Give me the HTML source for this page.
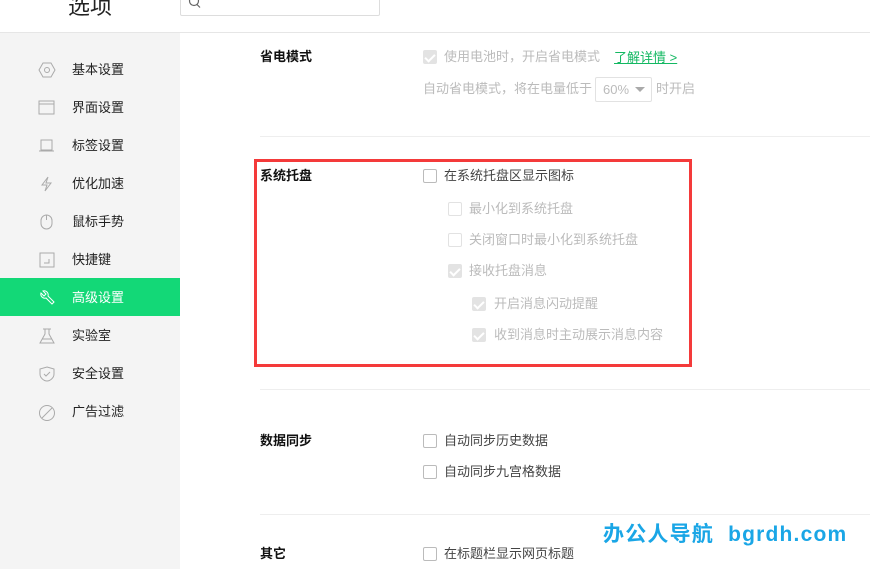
<!DOCTYPE html>
<html><head><meta charset="utf-8"><style>
*{margin:0;padding:0;box-sizing:border-box}
body{width:870px;height:569px;overflow:hidden;background:#fff;font-family:"Liberation Sans","Noto Sans CJK SC",sans-serif;font-size:13px;color:#222;position:relative}
.a{position:absolute;white-space:nowrap}
.side{position:absolute;left:0;top:33px;width:180px;height:536px;background:#f4f4f4}
.mi{position:absolute;left:0;width:180px;height:38px;line-height:40px;padding-left:72px;font-size:13px;color:#222}
.mi svg{position:absolute;left:38px;top:12px}
.act{background:#13d877;color:#fff}
.cb{position:absolute;width:14px;height:14px;border:1px solid #bbb;border-radius:2px;background:#fff}
.cb.d{border-color:#e2e2e2}
.cb.c{background:#e3e3e3;border-color:#e3e3e3}
.cb.c:after{content:"";position:absolute;left:3px;top:1px;width:4px;height:8px;border:solid #fff;border-width:0 2px 2px 0;transform:rotate(45deg)}
.t{position:absolute;white-space:nowrap;font-size:13px;line-height:18px}
.g{color:#bbb}.k{color:#444}
.h{position:absolute;left:260px;font-weight:bold;font-size:13px;line-height:18px;color:#111}
.hr{position:absolute;left:260px;width:610px;height:1px;background:#eee}
</style></head><body>
<div class="a" style="left:68px;top:-11px;font-size:22px;color:#222">选项</div>
<div class="a" style="left:180px;top:-6px;width:200px;height:22px;border:1px solid #ddd;border-radius:2px"></div>
<svg class="a" style="left:188px;top:-4px" width="14" height="14"><circle cx="6" cy="5" r="4.5" fill="none" stroke="#666" stroke-width="1.2"/><line x1="9" y1="8.5" x2="12" y2="11.5" stroke="#666" stroke-width="1.2"/></svg>
<div class="a" style="left:0;top:32px;width:870px;height:1px;background:#e6e6e6"></div>
<div class="side">
<div class="mi" style="top:17px"><svg width="18" height="16"><polygon points="5,1 13,1 17,8 13,15 5,15 1,8" fill="none" stroke="#aaa"/><circle cx="9" cy="8" r="2.5" fill="none" stroke="#aaa"/></svg>基本设置</div>
<div class="mi" style="top:55px"><svg width="18" height="16"><rect x="1" y="1" width="15" height="13" fill="none" stroke="#aaa"/><line x1="1" y1="4" x2="16" y2="4" stroke="#aaa"/></svg>界面设置</div>
<div class="mi" style="top:93px"><svg width="18" height="16"><path d="M3 2h11v10H3zM1 13h15" fill="none" stroke="#aaa"/></svg>标签设置</div>
<div class="mi" style="top:131px"><svg width="18" height="16"><path d="M10 1L4 9h5l-2 6 6-8H8z" fill="none" stroke="#aaa"/></svg>优化加速</div>
<div class="mi" style="top:169px"><svg width="18" height="16"><rect x="3" y="1" width="11" height="14" rx="5.5" fill="none" stroke="#aaa"/><line x1="8.5" y1="1" x2="8.5" y2="6" stroke="#aaa"/></svg>鼠标手势</div>
<div class="mi" style="top:207px"><svg width="18" height="16"><rect x="2" y="1" width="14" height="14" fill="none" stroke="#aaa"/><path d="M11 7v4H6" fill="none" stroke="#aaa"/></svg>快捷键</div>
<div class="mi act" style="top:245px"><svg width="18" height="16"><path d="M3 3l3 3 2-2-3-3c3-1 6 2 5 5l6 6-2 2-6-6c-3 1-6-2-5-5z" fill="none" stroke="#fff"/></svg>高级设置</div>
<div class="mi" style="top:283px"><svg width="18" height="16"><path d="M5 1h8M7 1v5L2 15h14L11 6V1M4 11h10" fill="none" stroke="#aaa"/></svg>实验室</div>
<div class="mi" style="top:321px"><svg width="18" height="16"><path d="M9 1l7 2v5c0 4-4 7-7 7S2 12 2 8V3z" fill="none" stroke="#aaa"/><path d="M6 8l2 2 4-4" fill="none" stroke="#aaa"/></svg>安全设置</div>
<div class="mi" style="top:359px"><svg width="18" height="18"><circle cx="9" cy="9" r="7.5" fill="none" stroke="#aaa"/><line x1="4" y1="14" x2="14" y2="4" stroke="#aaa"/></svg>广告过滤</div>
</div>

<div class="h" style="top:48px">省电模式</div>
<div class="cb c" style="left:423px;top:50px"></div>
<div class="t g" style="left:444px;top:48px">使用电池时，开启省电模式</div>
<div class="t" style="left:614px;top:49px;color:#13b862;text-decoration:underline">了解详情 &gt;</div>
<div class="t g" style="left:423px;top:80px">自动省电模式，将在电量低于</div>
<div class="a" style="left:595px;top:77px;width:57px;height:25px;border:1px solid #e2e2e2;border-radius:2px"></div>
<div class="t g" style="left:603px;top:81px">60%</div>
<div class="a" style="left:635px;top:87px;width:0;height:0;border-left:5px solid transparent;border-right:5px solid transparent;border-top:5px solid #aaa"></div>
<div class="t g" style="left:656px;top:80px">时开启</div>
<div class="hr" style="top:136px"></div>

<div class="a" style="left:254px;top:159px;width:438px;height:208px;border:3px solid #f43a3a"></div>
<div class="h" style="top:167px">系统托盘</div>
<div class="cb" style="left:423px;top:169px"></div>
<div class="t k" style="left:444px;top:167px">在系统托盘区显示图标</div>
<div class="cb d" style="left:448px;top:202px"></div>
<div class="t g" style="left:469px;top:200px">最小化到系统托盘</div>
<div class="cb d" style="left:448px;top:233px"></div>
<div class="t g" style="left:469px;top:231px">关闭窗口时最小化到系统托盘</div>
<div class="cb c" style="left:448px;top:264px"></div>
<div class="t g" style="left:469px;top:262px">接收托盘消息</div>
<div class="cb c" style="left:472px;top:297px"></div>
<div class="t g" style="left:494px;top:295px">开启消息闪动提醒</div>
<div class="cb c" style="left:472px;top:328px"></div>
<div class="t g" style="left:494px;top:326px">收到消息时主动展示消息内容</div>
<div class="hr" style="top:389px"></div>

<div class="h" style="top:432px">数据同步</div>
<div class="cb" style="left:423px;top:434px"></div>
<div class="t k" style="left:444px;top:432px">自动同步历史数据</div>
<div class="cb" style="left:423px;top:465px"></div>
<div class="t k" style="left:444px;top:463px">自动同步九宫格数据</div>
<div class="hr" style="top:514px"></div>
<div class="a" style="left:603px;top:518px;font-size:21px;font-weight:bold;color:#1aa6e6;letter-spacing:1.2px">办公人导航&nbsp; bgrdh.com</div>

<div class="h" style="top:545px">其它</div>
<div class="cb" style="left:423px;top:547px"></div>
<div class="t k" style="left:444px;top:545px">在标题栏显示网页标题</div>
</body></html>
